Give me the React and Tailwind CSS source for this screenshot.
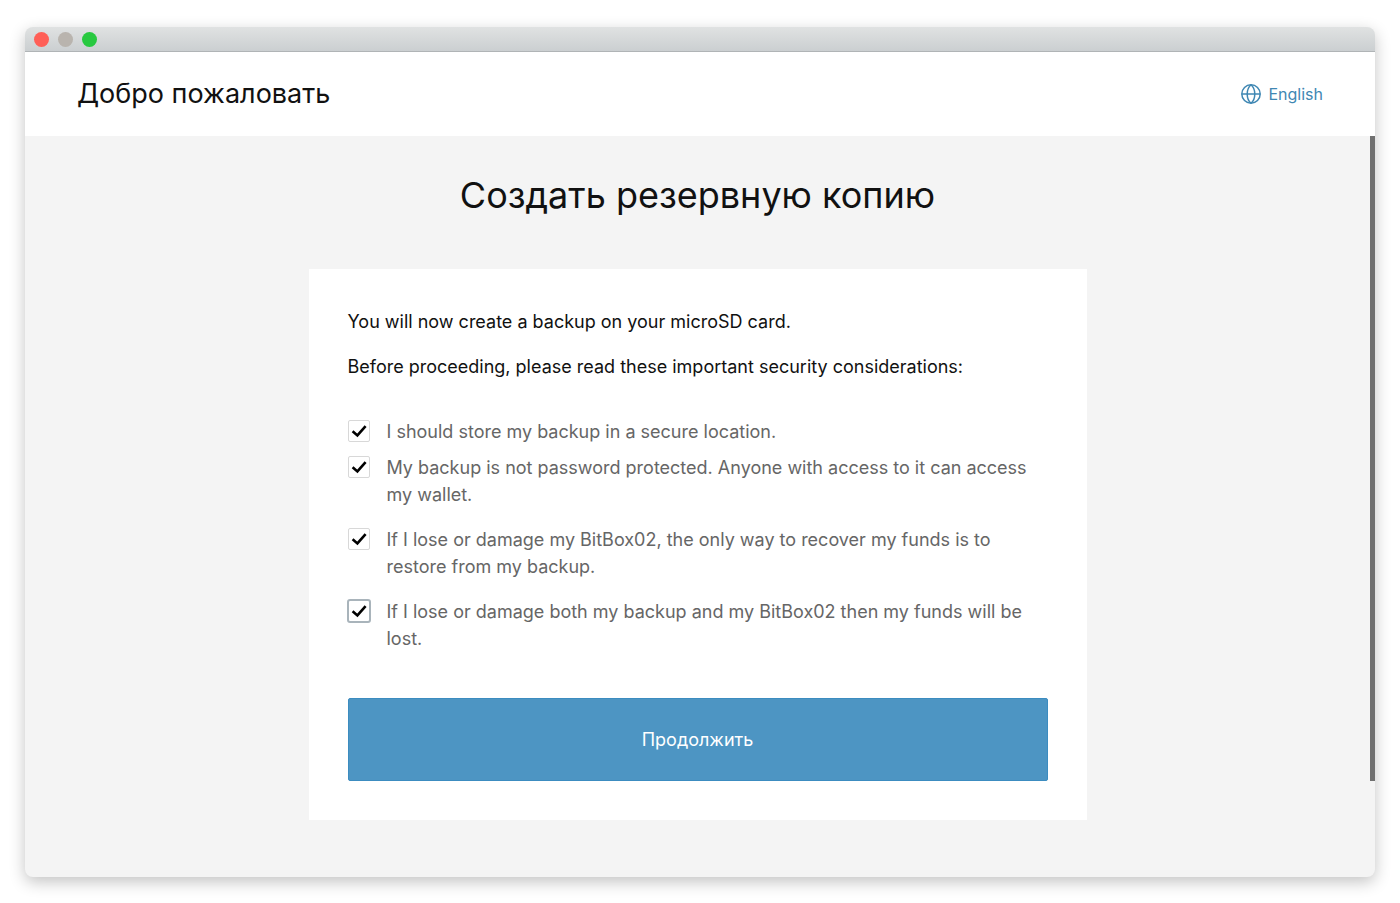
import { useState } from "react";

const considerations = [
    { id: "secure", text: "I should store my backup in a secure location." },
    { id: "password", text: "My backup is not password protected. Anyone with access to it can access my wallet." },
    { id: "recover", text: "If I lose or damage my BitBox02, the only way to recover my funds is to restore from my backup." },
    { id: "lost", text: "If I lose or damage both my backup and my BitBox02 then my funds will be lost." },
];

const GlobeIcon = () => (
    <svg width="20" height="20" viewBox="0 0 20 20" fill="none" stroke="currentColor" strokeWidth="1.5" aria-hidden="true">
        <circle cx="10" cy="10" r="9.2" />
        <path d="M0.8 10h18.4" />
        <path d="M10 0.8C7.4 3 6.2 6.4 6.2 10s1.2 7 3.8 9.2" />
        <path d="M10 0.8c2.6 2.2 3.8 5.6 3.8 9.2s-1.2 7-3.8 9.2" />
    </svg>
);

const Consideration = ({ id, text, checked, focused, onChange }) => (
    <li className="flex items-start gap-[17px] first:-mb-[9px]">
        <span className="relative mt-[2px] h-[22px] w-[22px] shrink-0">
            <input
                id={id}
                type="checkbox"
                checked={checked}
                onChange={onChange}
                className={`block h-[22px] w-[22px] appearance-none rounded-[2px] border bg-white ${focused ? "border-dotted border-[#4d95c3] bg-clip-padding outline-2 outline-[#a9b4bb] -outline-offset-1" : "border-[#d8d8d8] outline-none"}`}
            />
            {checked &&
                <svg className="pointer-events-none absolute inset-0" width="22" height="22" viewBox="0 0 22 22" fill="none" stroke="#000" strokeWidth="2.6" aria-hidden="true">
                    <path d="M4.6 11.2L9.4 15.4L17.6 6.2" />
                </svg>
            }
        </span>
        <label htmlFor={id} className="text-[18px] leading-[27px] text-[#666]">{text}</label>
    </li>
);

const App = () => {
    const [agreed, setAgreed] = useState({ secure: true, password: true, recover: true, lost: true });
    const [lastTouched, setLastTouched] = useState("lost");

    const toggle = (id) => {
        setAgreed({ ...agreed, [id]: !agreed[id] });
        setLastTouched(id);
    };

    return (
        <div className="flex min-h-screen flex-col bg-white px-[25px] pt-[27px] pb-[26px] font-['Inter',sans-serif] text-[#111]">
            <div className="flex flex-1 flex-col overflow-hidden rounded-lg bg-[#f4f4f4] shadow-[0_5px_16px_rgba(0,0,0,0.24)]">
                {/* title bar */}
                <div className="flex h-[25px] items-center gap-[9px] border-b border-[#b0b4b6] bg-linear-to-b from-[#e0e2e2] to-[#cbcfd1] px-[9px]">
                    <span className="h-[15px] w-[15px] rounded-full bg-[#ff5f57]" />
                    <span className="h-[15px] w-[15px] rounded-full bg-[#b9b4ae]" />
                    <span className="h-[15px] w-[15px] rounded-full bg-[#28c940]" />
                </div>

                <header className="flex h-[84px] items-center justify-between bg-white px-[52px]">
                    <h2 className="text-[27px] leading-9">Добро пожаловать</h2>
                    <button type="button" className="flex items-center gap-[7px] text-[16px] leading-6 text-[#3f87b3]">
                        <GlobeIcon />
                        English
                    </button>
                </header>

                <div className="flex flex-1">
                    <main className="flex flex-1 flex-col items-center px-6 pt-9 pb-14">
                        <h1 className="text-center text-[36px] leading-[46px]">Создать резервную копию</h1>

                        <section className="mt-[51px] w-full max-w-[778px] bg-white p-[39px]">
                            <div className="flex flex-col gap-[18px] text-[18px] leading-[27px]">
                                <p>You will now create a backup on your microSD card.</p>
                                <p>Before proceeding, please read these important security considerations:</p>
                            </div>

                            <ul className="mt-[38px] flex flex-col gap-[18px]">
                                {considerations.map((c) => (
                                    <Consideration
                                        key={c.id}
                                        id={c.id}
                                        text={c.text}
                                        checked={agreed[c.id]}
                                        focused={lastTouched === c.id}
                                        onChange={() => toggle(c.id)}
                                    />
                                ))}
                            </ul>

                            <button type="button" className="mt-[46px] h-[83px] w-full rounded-[2px] border border-[#3c8cc0] bg-[#4d95c3] text-[18px] leading-[27px] text-white">
                                Продолжить
                            </button>
                        </section>
                    </main>

                    {/* scrollbar */}
                    <div className="w-[5px]">
                        <div className="h-[87%] bg-[#707070]" />
                    </div>
                </div>
            </div>
        </div>
    );
};

export default App;
